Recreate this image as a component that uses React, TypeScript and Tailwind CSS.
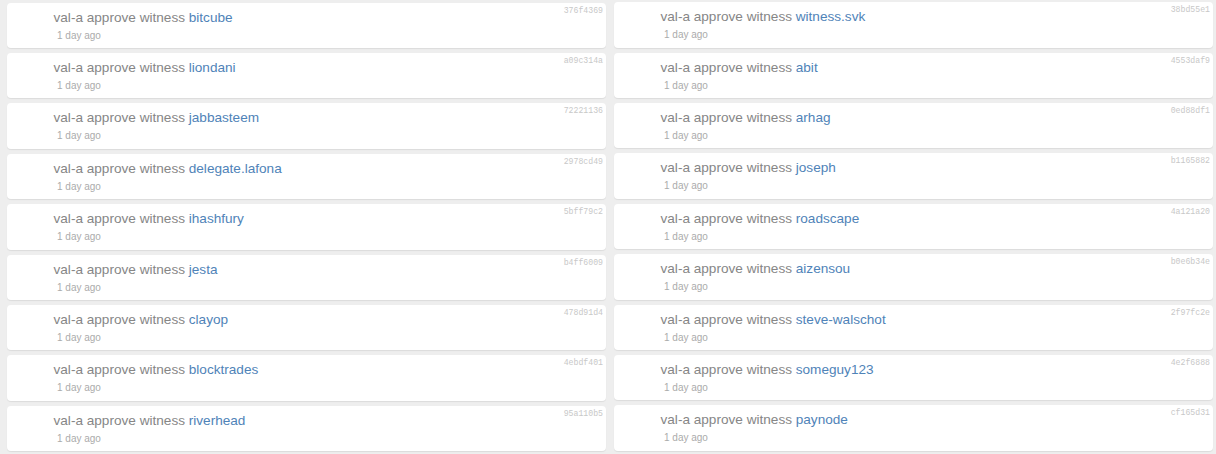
const LEFT = [
  { name: 'bitcube', hash: '376f4369' },
  { name: 'liondani', hash: 'a09c314a' },
  { name: 'jabbasteem', hash: '72221136' },
  { name: 'delegate.lafona', hash: '2978cd49' },
  { name: 'ihashfury', hash: '5bff79c2' },
  { name: 'jesta', hash: 'b4ff6009' },
  { name: 'clayop', hash: '478d91d4' },
  { name: 'blocktrades', hash: '4ebdf401' },
  { name: 'riverhead', hash: '95a110b5' },
]

const RIGHT = [
  { name: 'witness.svk', hash: '38bd55e1' },
  { name: 'abit', hash: '4553daf9' },
  { name: 'arhag', hash: '0ed88df1' },
  { name: 'joseph', hash: 'b1165882' },
  { name: 'roadscape', hash: '4a121a20' },
  { name: 'aizensou', hash: 'b0e6b34e' },
  { name: 'steve-walschot', hash: '2f97fc2e' },
  { name: 'someguy123', hash: '4e2f6888' },
  { name: 'paynode', hash: 'cf165d31' },
]

function Card({ name, hash }: { name: string; hash: string }) {
  return (
    <div className="relative h-[45.4px] rounded-[4px] bg-white pl-[46.5px] pt-[5px] shadow-[0_1px_1px_rgba(0,0,0,0.08)]">
      <span className="absolute right-[3px] top-[2px] font-['Liberation_Mono',monospace] text-[8.2px] leading-[12px] text-[#c8c8c8]">{hash}</span>
      <div className="text-[13.6px] leading-[20px] text-[#868686]">
        val-a approve witness <a className="text-[#4f83b8]">{name}</a>
      </div>
      <div className="mt-[1px] pl-[3.5px] text-[10px] leading-[14px] text-[#ababab]">1 day ago</div>
    </div>
  )
}

export default function App() {
  return (
    <div className="flex h-[454px] w-[1216px] gap-[8px] overflow-hidden bg-[#eeeeee] pl-[7px] pr-[3px] font-['Liberation_Sans',Arial,sans-serif]">
      <div className="flex w-[599px] flex-col gap-[5px] pt-[2.6px]">
        {LEFT.map(r => <Card key={r.hash} {...r} />)}
      </div>
      <div className="flex w-[599px] flex-col gap-[5px] pt-[2.2px]">
        {RIGHT.map(r => <Card key={r.hash} {...r} />)}
      </div>
    </div>
  )
}
